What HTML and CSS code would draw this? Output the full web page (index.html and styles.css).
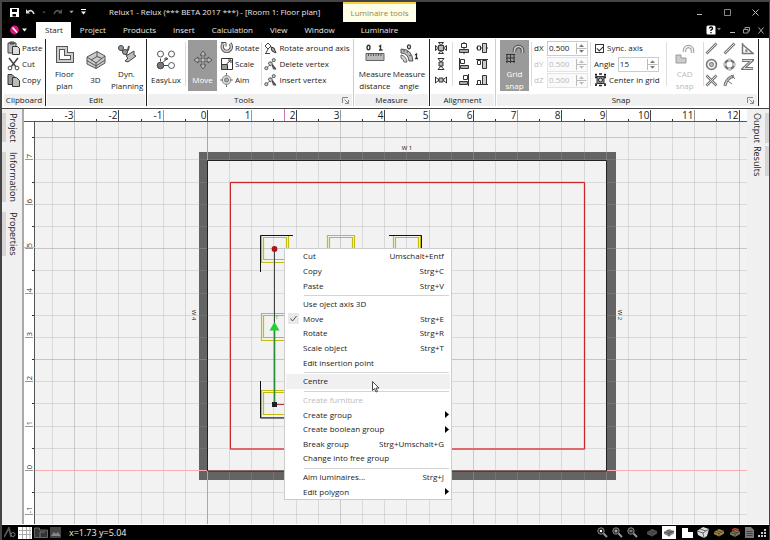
FILE: index.html
```html
<!DOCTYPE html>
<html lang="en">
<head>
<meta charset="utf-8">
<title>Relux1 - Relux</title>
<link rel="stylesheet" href="styles.css">
</head>
<body>
<svg class="sprite" aria-hidden="true">
  <symbol id="caret" viewBox="0 0 6 4"><path d="M0.5 0.5h5L3 3.5z" fill="currentColor"/></symbol>
  <symbol id="spin" viewBox="0 0 11 13"><path d="M0.5 1v11M0.5 6.5h10" stroke="#bbb" fill="none"/><path d="M5.5 2.2L8 5H3zM5.5 10.8L8 8H3z" fill="currentColor"/></symbol>
  <symbol id="launch" viewBox="0 0 7 7"><path d="M0.5 6V0.5H6M2.5 2.5L6 6M6.5 3v3.5H3" fill="none" stroke="#888"/></symbol>
  <symbol id="vertex" viewBox="0 0 14 14"><path d="M2 12.5L11.5 2M6 4.500L12 11" stroke="#666" fill="none"/><circle cx="2.5" cy="11.500" r="1.700" fill="#ccc" stroke="#555"/><circle cx="10.500" cy="2.800" r="1.700" fill="#ccc" stroke="#555"/><path d="M4.500 6l3-1.500 2 3-3 1.500z" fill="#ccc" stroke="#555"/><path d="M9 8l4 4.500-3-.3z" fill="#888" stroke="#333"/></symbol>
  <symbol id="lens" viewBox="0 0 11 11"><circle cx="4" cy="4" r="3.200" fill="#222" stroke="#888"/><path d="M6.500 6.500L10 10" stroke="#999" stroke-width="1.800"/></symbol>
  <symbol id="box" viewBox="0 0 12 9"><path d="M1 4l5-3 5 2v2.500L6 8.500 1 6z" fill="currentColor"/><path d="M1 4l5 1.500 5-2.500M6 5.500v3M3.500 2.500l5 1.700" stroke="#333" stroke-width=".7" fill="none"/></symbol>
</svg>
<div class="window">
  <header class="titlebar">
    <div class="title-row">
      <div class="quick">
        <button aria-label="Save"><svg width="9" height="9" viewBox="0 0 9 9"><path d="M0 0h9v9H0z" fill="#fff"/><path d="M2 1h5v3H2zM2.500 6h3.500v2.500H2.500z"/></svg></button>
        <button aria-label="Undo" class="undo"><svg width="9" height="6" viewBox="0 0 9 6"><path d="M1.500 3Q6-.5 8 5" fill="none" stroke="#ddd" stroke-width="1.600"/><path d="M0 0v4.500h4z" fill="#ddd"/></svg></button>
        <button aria-label="Undo list" class="dim"><svg width="4" height="3"><use href="#caret"/></svg></button>
        <button aria-label="Redo"><svg width="9" height="6" viewBox="0 0 9 6"><path d="M7.500 3Q3-.5 1 5" fill="none" stroke="#555" stroke-width="1.600"/><path d="M9 0v4.500H5z" fill="#555"/></svg></button>
        <button aria-label="Redo list" class="soft"><svg width="5" height="4"><use href="#caret"/></svg></button>
        <button aria-label="Customize"><svg width="5" height="6" viewBox="0 0 5 6"><path d="M0 .5h5" stroke="#fff"/><path d="M0 2.500h5L2.500 5.500z" fill="#fff"/></svg></button>
      </div>
      <h1>Relux1 - Relux (*** BETA 2017 ***) - [Room 1: Floor plan]</h1>
      <div class="context-tab">Luminaire tools</div>
      <div class="win-buttons">
        <button aria-label="Minimize"><svg width="7" height="7"><path d="M1 5.500h5" stroke="#bbb"/></svg></button>
        <button aria-label="Maximize"><svg width="7" height="7"><path d="M.5.5h6v6h-6z" fill="none" stroke="#888"/></svg></button>
        <button aria-label="Close"><svg width="7" height="7"><path d="M.5.5l6 6M6.500.5l-6 6" stroke="#bbb"/></svg></button>
      </div>
    </div>
    <nav class="tab-row">
      <button class="app" aria-label="Application menu"><svg width="18" height="10" viewBox="0 0 18 10"><circle cx="4.500" cy="5" r="4.400" fill="#e5127d"/><path d="M2.500 2.500L7 7.500" stroke="#fff" stroke-width="1.600"/><path d="M12 3.500h5L14.500 6.500z" fill="#fff"/></svg></button>
      <button class="tab current">Start</button>
      <button class="tab">Project</button>
      <button class="tab">Products</button>
      <button class="tab">Insert</button>
      <button class="tab">Calculation</button>
      <button class="tab">View</button>
      <button class="tab">Window</button>
      <button class="tab lum">Luminaire</button>
      <div class="doc-buttons">
        <button aria-label="Help"><svg width="15" height="10" viewBox="0 0 15 10"><path d="M2 .5h6q1.500 0 1.500 1.500v7.500H2Q.5 9.500.5 8V2Q.5.5 2 .5z" fill="#fff"/><path d="M3.500 3.500Q3.500 2 5 2t1.500 1.400Q6.500 4.300 5 5v1M5 7v1.300" fill="none" stroke="#000" stroke-width="1.300"/><path d="M11 3h4l-2 2.500z" fill="#777"/></svg></button>
        <button aria-label="Minimize document"><svg width="6" height="7"><path d="M1 5.500h5" stroke="#bbb"/></svg></button>
        <button aria-label="Restore document"><svg width="7" height="7"><path d="M2 2V.5h4.500V4H5M.5 2.500H5v3.500H.5z" fill="none" stroke="#999"/></svg></button>
        <button aria-label="Close document"><svg width="6" height="7"><path d="M.5.5l5 6M5.500.5l-5 6" stroke="#aaa"/></svg></button>
      </div>
    </nav>
  </header>

  <section class="ribbon" aria-label="Ribbon">
    <div class="group clipboard">
      <div class="tools">
        <div class="rows">
          <button class="small"><svg width="13" height="14" viewBox="0 0 13 14"><path d="M1 2h8v10H1z" fill="#bbb" stroke="#444"/><path d="M3 1h4v2H3z" fill="#777" stroke="#444"/><path d="M5.500 5.500h5l2 2v6h-7z" fill="#ddd" stroke="#333"/></svg>Paste</button>
          <button class="small"><svg width="13" height="14" viewBox="0 0 13 14"><path d="M2 1l7 9M11 1L4 10" stroke="#444" stroke-width="1.500"/><circle cx="3" cy="11" r="1.900" fill="#fff" stroke="#444"/><circle cx="10" cy="11" r="1.900" fill="#fff" stroke="#444"/></svg>Cut</button>
          <button class="small"><svg width="13" height="14" viewBox="0 0 13 14"><path d="M1 1.500h4l3 3v7H1z" fill="#999" stroke="#333"/><path d="M5.500 4.500h4l3 3v6h-7z" fill="#bbb" stroke="#333"/></svg>Copy</button>
        </div>
      </div>
      <h2>Clipboard</h2>
    </div>
    <div class="group edit">
      <div class="tools">
        <button class="big"><svg width="20" height="20" viewBox="0 0 20 20"><path d="M3 4h8v6h6v7H3z" fill="none" stroke="#555" stroke-width="4"/><path d="M3 4h8v6h6v7H3z" fill="none" stroke="#ccc" stroke-width="2"/></svg>Floor<br>plan</button>
        <button class="big"><svg width="20" height="20" viewBox="0 0 20 20"><path d="M1 7l10-5.500 8 4.500v7l-9 5.500L1 14z" fill="#ccc" stroke="#555"/><path d="M1 7l9 6 9-7M10 13v5.500M11 1.500v5L5 10M11 6.500l5 2M1 10.500l9 5.500 9-6" fill="none" stroke="#555"/></svg>3D</button>
        <button class="big"><svg width="20" height="20" viewBox="0 0 20 20"><path d="M2 3l5 5 4-2 1-4M6 7l4 4" stroke="#555" stroke-width="2" fill="none"/><circle cx="4" cy="4" r="2.500" fill="#999" stroke="#444"/><circle cx="8" cy="8" r="2.500" fill="#999" stroke="#444"/><path d="M9 12l8-5v4l2 1-8 6-3-1 3-3z" fill="#bbb" stroke="#444"/></svg>Dyn.<br>Planning</button>
      </div>
      <h2>Edit</h2>
    </div>
    <div class="group main">
      <div class="tools">
        <button class="big"><svg width="20" height="20" viewBox="0 0 20 20"><g fill="#fff" stroke="#555"><circle cx="4.500" cy="4" r="3"/><circle cx="15.500" cy="4" r="3"/><circle cx="15.500" cy="15.500" r="3"/></g><circle cx="4.500" cy="15.500" r="3.300" fill="#777" stroke="#444"/><path d="M6 13l6-5M4.500 8.500v3M8 15.500h4M10 7v3M8 9h4" stroke="#444" fill="none"/></svg>EasyLux</button>
        <i class="rule"></i>
        <button class="big pressed"><svg width="20" height="20" viewBox="0 0 20 20"><path d="M10 1l3 4h-2v4h4V7l4 3-4 3v-2h-4v4h2l-3 4-3-4h2v-4H5v2l-4-3 4-3v2h4V5H7z" fill="#bbb" stroke="#444" stroke-width=".8"/></svg>Move</button>
        <div class="rows first">
          <button class="small"><svg width="13" height="14" viewBox="0 0 13 14"><path d="M3.500 2.500a4.600 4.600 0 1 0 6.500 0" fill="none" stroke="#555" stroke-width="3.400"/><path d="M3.500 2.500a4.600 4.600 0 1 0 6.500 0" fill="none" stroke="#ccc" stroke-width="1.600"/><path d="M1 1.500h5v4" fill="none" stroke="#555"/></svg>Rotate</button>
          <button class="small"><svg width="13" height="14" viewBox="0 0 13 14"><path d="M1.500 1.500h11v11h-11z" fill="#fff" stroke="#333"/><path d="M1.500 7.500h6v5h-6z" fill="#999" stroke="#333"/><path d="M6.500 7L11 3M8 3h3v3" fill="none" stroke="#333"/></svg>Scale</button>
          <button class="small"><svg width="13" height="14" viewBox="0 0 13 14"><circle cx="6.500" cy="7" r="4.400" fill="#ddd" stroke="#888"/><circle cx="6.500" cy="7" r="2" fill="#aaa" stroke="#777"/><path d="M6.500 0v3M6.500 11v3M0 7h3M10 7h3" stroke="#777"/></svg>Aim</button>
        </div>
        <i class="rule"></i>
        <div class="rows">
          <button class="small"><svg width="13" height="14" viewBox="0 0 13 14"><path d="M1 5l3-3 3 3-3 3z" fill="#fff" stroke="#444"/><path d="M1 12.500h5M4 8L2 12" stroke="#444"/><path d="M7 6l3 1 2 5-4-2z" fill="#aaa" stroke="#333"/></svg>Rotate around axis</button>
          <button class="small"><svg width="13" height="14"><use href="#vertex"/></svg>Delete vertex</button>
          <button class="small"><svg width="13" height="14"><use href="#vertex"/></svg>Insert vertex</button>
        </div>
      </div>
      <h2 class="with-launcher">Tools<button class="launcher" aria-label="Tools options"><svg width="7" height="7"><use href="#launch"/></svg></button></h2>
    </div>
    <div class="group measure">
      <div class="tools">
        <button class="big"><svg width="20" height="20" viewBox="0 0 20 20"><path d="M1 9.500h18v7H1z" fill="#bbb" stroke="#666"/><path d="M3.500 9v3M6 9v3M8.500 9v3M11 9v3M13.500 9v3M16 9v3" stroke="#555"/><ellipse cx="3.500" cy="3.500" rx="1.500" ry="2.200" fill="none" stroke="#333" stroke-width="1.400"/><path d="M14 2.500l1.500-1V6M14 6h3.500" fill="none" stroke="#333" stroke-width="1.400"/></svg>Measure<br>distance</button>
        <button class="big"><svg width="20" height="20" viewBox="0 0 20 20"><path d="M2 5Q13 5 14 17h-4Q9 9 2 9z" fill="#bbb" stroke="#555"/><path d="M2 11q5 1 6 7H5q0-3-3-4z" fill="#ddd" stroke="#666"/><path d="M5 6v2M9 7L8 9M12 11l-2 1" stroke="#555"/><ellipse cx="10" cy="2.800" rx="1.500" ry="2" fill="none" stroke="#333" stroke-width="1.300"/><path d="M16 11l1.500-1v4.500M16 14.500h3" fill="none" stroke="#333" stroke-width="1.300"/></svg>Measure<br>angle</button>
      </div>
      <h2>Measure</h2>
    </div>
    <div class="group align">
      <div class="tools">
        <div class="rows icons">
          <button aria-label="Distribute both"><svg width="12" height="12" viewBox="0 0 12 12"><path d="M3.500 3.500h5v5h-5z" fill="#bbb" stroke="#333"/><path d="M3.500.5h5L6 3.500zM3.500 11.500h5L6 8.500zM.5 3.500v5L3.500 6zM11.500 3.500v5L8.500 6z" fill="#ddd" stroke="#333"/></svg></button>
          <button aria-label="Distribute vertically"><svg width="12" height="12" viewBox="0 0 12 12"><path d="M4 4h4v4H4z" fill="#bbb" stroke="#333"/><path d="M3 .5h6L6 4zM3 11.500h6L6 8z" fill="#fff" stroke="#333"/></svg></button>
          <button aria-label="Distribute horizontally"><svg width="12" height="12" viewBox="0 0 12 12"><path d="M4 4h4v4H4z" fill="#bbb" stroke="#333"/><path d="M.5 3v6L4 6zM11.500 3v6L8 6z" fill="#fff" stroke="#333"/></svg></button>
        </div>
        <i class="rule"></i>
        <div class="rows icons">
          <button aria-label="Align centre vertical"><svg width="12" height="12" viewBox="0 0 12 12"><path d="M6 0v12" stroke="#333"/><path d="M3.500 1.500h5v4h-5z" fill="#fff" stroke="#333"/><path d="M1.500 7.500h9v3h-9z" fill="#aaa" stroke="#333"/></svg></button>
          <button aria-label="Align left"><svg width="12" height="12" viewBox="0 0 12 12"><path d="M1.500 0v12" stroke="#333"/><path d="M2.500 1.500h4v4h-4z" fill="#fff" stroke="#333"/><path d="M2.500 7.500h8v3h-8z" fill="#aaa" stroke="#333"/></svg></button>
          <button aria-label="Align right"><svg width="12" height="12" viewBox="0 0 12 12"><path d="M10.500 0v12" stroke="#333"/><path d="M5.500 1.500h4v4h-4z" fill="#fff" stroke="#333"/><path d="M1.500 7.500h8v3h-8z" fill="#aaa" stroke="#333"/></svg></button>
        </div>
        <div class="rows icons">
          <button aria-label="Align centre horizontal"><svg width="12" height="12" viewBox="0 0 12 12"><path d="M0 6h12" stroke="#333"/><path d="M1.500 4h3v4h-3z" fill="#fff" stroke="#333"/><path d="M6.500 1.500h4v9h-4z" fill="#ccc" stroke="#333"/></svg></button>
          <button aria-label="Align top"><svg width="12" height="12" viewBox="0 0 12 12"><path d="M0 1.500h12" stroke="#333"/><path d="M1.500 2.500h3v4h-3z" fill="#fff" stroke="#333"/><path d="M6.500 2.500h4v8h-4z" fill="#ccc" stroke="#333"/></svg></button>
          <button aria-label="Align bottom"><svg width="12" height="12" viewBox="0 0 12 12"><path d="M0 10.500h12" stroke="#333"/><path d="M1.500 6.500h3v4h-3z" fill="#fff" stroke="#333"/><path d="M6.500 1.500h4v9h-4z" fill="#ccc" stroke="#333"/></svg></button>
        </div>
      </div>
      <h2>Alignment</h2>
    </div>
    <div class="group snap">
      <div class="tools">
        <button class="big pressed"><svg width="20" height="20" viewBox="0 0 20 20"><path d="M1 10.500h9M1 14h9M1 17.500h9M2 10v9M5.500 10v9M9 10v9" stroke="#333"/><path d="M9.500 8V6.500a4 4 0 0 1 8 0V9" fill="none" stroke="#444" stroke-width="3.500"/><path d="M9.500 8V6.500a4 4 0 0 1 8 0V9" fill="none" stroke="#ccc" stroke-width="1.700"/></svg>Grid<br>snap</button>
        <i class="rule"></i>
        <div class="rows fields">
          <label>dX <span class="spin"><input type="text" value="0.500"><svg width="11" height="13"><use href="#spin"/></svg></span></label>
          <label class="off">dY <span class="spin"><input type="text" value="0.500" disabled><svg width="11" height="13"><use href="#spin"/></svg></span></label>
          <label class="off">dZ <span class="spin"><input type="text" value="0.500" disabled><svg width="11" height="13"><use href="#spin"/></svg></span></label>
        </div>
        <i class="rule"></i>
        <div class="rows options">
          <label class="check"><input type="checkbox" checked>Sync. axis</label>
          <label class="angle">Angle <span class="spin"><input type="text" value="15"><svg width="11" height="13"><use href="#spin"/></svg></span></label>
          <button class="small"><svg width="13" height="14" viewBox="0 0 13 14"><path d="M3 3.500h7v7H3z" fill="#999" stroke="#333"/><path d="M1 1.500h2M1 4.500h2M10 1.500h2M10 4.500h2M1 12h2M10 12h2M2 1v3M11 1v3M2 10v3M11 10v3M5 1h3M5 12.500h3" stroke="#222" stroke-width="1.300"/><circle cx="6.500" cy="7" r="2" fill="#ddd" stroke="#222"/></svg>Center in grid</button>
        </div>
        <i class="rule"></i>
        <button class="big faded"><svg width="20" height="20" viewBox="0 0 20 20"><path d="M1 11h5v3h5v5H1z" fill="#ccc" stroke="#999"/><path d="M9.500 8V6.500a4 4 0 0 1 8 0V9" fill="none" stroke="#999" stroke-width="3.500"/><path d="M9.500 8V6.500a4 4 0 0 1 8 0V9" fill="none" stroke="#eee" stroke-width="1.700"/></svg>CAD<br>snap</button>
        <i class="rule"></i>
        <div class="snaps">
          <button aria-label="Snap end"><svg width="13" height="13" viewBox="0 0 13 13"><path d="M1.500 11.500l10-10" stroke="#777" stroke-width="2.600"/><path d="M2 11l9-9" stroke="#ddd"/></svg></button>
          <button aria-label="Snap middle"><svg width="13" height="13" viewBox="0 0 13 13"><path d="M1.500 11.500l10-10" stroke="#777" stroke-width="2.600"/><path d="M2 11l9-9" stroke="#ddd"/></svg></button>
          <button aria-label="Snap perpendicular"><svg width="13" height="13" viewBox="0 0 13 13"><path d="M1.500 1v10.500H12L1.500 2.500" fill="none" stroke="#777" stroke-width="1.500"/><path d="M4 9h3M5 7v3" stroke="#777"/></svg></button>
          <button aria-label="Snap centre"><svg width="13" height="13" viewBox="0 0 13 13"><circle cx="6.500" cy="6.500" r="5" fill="#eee" stroke="#777" stroke-width="1.500"/><circle cx="6.500" cy="6.500" r="2" fill="#bbb" stroke="#777"/></svg></button>
          <button aria-label="Snap quadrant"><svg width="13" height="13" viewBox="0 0 13 13"><circle cx="6.500" cy="6.500" r="4.300" fill="none" stroke="#777" stroke-width="2.500"/><path d="M6.500 0v3.500M6.500 9.500V13M0 6.500h3.500M9.500 6.500H13" stroke="#ccc" stroke-width="2.500"/></svg></button>
          <button aria-label="Snap path"><svg width="13" height="13" viewBox="0 0 13 13"><path d="M1 2.500h10L2.500 10.500H12" fill="none" stroke="#777" stroke-width="3"/><path d="M1.500 2.500H11L2.500 10.500h9" fill="none" stroke="#ddd"/></svg></button>
          <button aria-label="Snap intersection"><svg width="13" height="13" viewBox="0 0 13 13"><path d="M1.500 1.500l10 10M11.500 1.500l-10 10" stroke="#777" stroke-width="2.600"/><path d="M2 2l9 9M11 2l-9 9" stroke="#ddd"/></svg></button>
          <button aria-label="Snap tangent"><svg width="13" height="13" viewBox="0 0 13 13"><path d="M2 12Q3 4 11 2" fill="none" stroke="#777" stroke-width="3"/><path d="M2 11.500Q3.500 4 10.500 2" fill="none" stroke="#ddd"/><path d="M5 7l4 3M8 1l4 4" stroke="#777"/></svg></button>
        </div>
      </div>
      <h2 class="with-launcher">Snap<button class="launcher" aria-label="Snap options"><svg width="7" height="7"><use href="#launch"/></svg></button></h2>
    </div>
  </section>

  <main class="workspace">
    <aside class="side left">
      <button>Project</button>
      <button>Information</button>
      <button>Properties</button>
    </aside>
    <div class="plan">
      <svg id="ruler-x" class="ruler-x" aria-label="Horizontal ruler"></svg>
      <svg id="ruler-y" class="ruler-y" aria-label="Vertical ruler"></svg>
      <svg id="drawing" class="drawing" aria-label="Floor plan">
        <path class="wall" d="M164 30h417v328H164zM172.500 38.500h399v310.500h-399z"/>
        <g id="grid"></g>
        <path d="M0 348.500h712" stroke="#f3b0b0"/>
        <path d="M172.500 38.500h399v310.500h-399z" fill="none" stroke="#222"/>
        <path d="M172.500 0v38M172.500 349v60" stroke="#5fdc5f"/>
        <path d="M195 60.500h354.500v266.500H195z" fill="none" stroke="#f2b0b0" stroke-width="2"/>
        <path d="M195.500 60.500h354v266.500h-354z" fill="none" stroke="#c8262c"/>
        <g fill="none" stroke="#c2bd10" stroke-width="1.200">
          <path d="M226.500 113.500h27v27h-27zM228.500 115.500h23v22h-23z"/>
          <path d="M292.500 113.500h27v27h-27zM294.500 115.500h23v22h-23z"/>
          <path d="M358.500 113.500h27v27h-27zM360.500 115.500h23v22h-23z"/>
          <path d="M226.500 191.500h27v27h-27zM228.500 193.500h23v22h-23z"/>
          <path d="M226.500 268.500h27v27h-27zM228.500 270.500h23v22h-23z"/>
        </g>
        <path d="M225.500 150v-36.500H258M354 113.500h32.500V141M225.500 259v37H253" fill="none" stroke="#111"/>
        <path d="M239.500 127v84" stroke="#444"/>
        <path d="M239.500 282v-76" stroke="#2c8d38" stroke-width="1.600"/>
        <path d="M239.500 282.500h12" stroke="#a33"/>
        <circle cx="239.500" cy="127" r="2.900" fill="#b5121b"/>
        <path d="M239.500 200l5 8.500h-10z" fill="#1fd22c"/>
        <path d="M237 280h5v5h-5z" fill="#222"/>
        <text class="axis" x="240" y="197">Y</text>
        <text class="tag" transform="translate(372 26)" text-anchor="middle" y="2">W 1</text>
        <text class="tag" transform="translate(159 193) rotate(90)" text-anchor="middle" y="2">W 4</text>
        <text class="tag" transform="translate(585 193) rotate(90)" text-anchor="middle" y="2">W 2</text>
      </svg>
      <div class="menu" role="menu">
        <button role="menuitem">Cut<kbd>Umschalt+Entf</kbd></button>
        <button role="menuitem">Copy<kbd>Strg+C</kbd></button>
        <button role="menuitem">Paste<kbd>Strg+V</kbd></button>
        <hr>
        <button role="menuitem">Use oject axis 3D</button>
        <button role="menuitem" class="ticked"><svg class="tick" width="11" height="11" viewBox="0 0 11 11"><path d="M0 0h11v11H0z" fill="#e9e9e9"/><path d="M2.500 5.500L4.500 8l4-5" fill="none" stroke="#555"/></svg>Move<kbd>Strg+E</kbd></button>
        <button role="menuitem">Rotate<kbd>Strg+R</kbd></button>
        <button role="menuitem">Scale object<kbd>Strg+T</kbd></button>
        <button role="menuitem">Edit insertion point</button>
        <hr>
        <button role="menuitem" class="hover">Centre</button>
        <hr>
        <button role="menuitem" disabled>Create furniture</button>
        <button role="menuitem">Create group<svg class="sub" width="4" height="7"><path d="M0 0l4 3.500L0 7z"/></svg></button>
        <button role="menuitem">Create boolean group<svg class="sub" width="4" height="7"><path d="M0 0l4 3.500L0 7z"/></svg></button>
        <button role="menuitem">Break group<kbd>Strg+Umschalt+G</kbd></button>
        <button role="menuitem">Change into free group</button>
        <hr>
        <button role="menuitem">Aim luminaires...<kbd>Strg+J</kbd></button>
        <button role="menuitem">Edit polygon<svg class="sub" width="4" height="7"><path d="M0 0l4 3.500L0 7z"/></svg></button>
        <svg class="pointer" width="8" height="12" viewBox="0 0 8 12"><path d="M.5.5v9l2-2 1.500 3.500 1.500-.7L4 7h3z" fill="#fff" stroke="#333" stroke-width=".9"/></svg>
      </div>
    </div>
    <aside class="side right">
      <button>Output</button>
      <button>Results</button>
    </aside>
  </main>

  <footer class="status">
    <div class="modes">
      <button aria-label="Text"><svg width="12" height="11" viewBox="0 0 12 11"><path d="M0 10L5 1l2 9" fill="none" stroke="#555" stroke-width="1.800"/><circle cx="9" cy="7.500" r="2" fill="none" stroke="#777"/></svg></button>
      <button aria-label="Grid" class="on"><svg width="14" height="12" viewBox="0 0 14 12"><path d="M1 3.500h12M1 7.500h12M4.500 0v12M8.500 0v12M12 0v12" stroke="#aaa"/></svg></button>
      <button aria-label="Room"><svg width="14" height="11" viewBox="0 0 14 11"><path d="M.5 1h5v2h8v7.500H.5z" fill="#333" stroke="#666"/><path d="M6 5h5M6 5v5" stroke="#777"/></svg></button>
      <button aria-label="Image"><svg width="11" height="11" viewBox="0 0 11 11"><path d="M0 0h11v11H0z" fill="#444"/><path d="M1 9l3-4 2 2 2-2 2.500 4z" fill="#888"/></svg></button>
    </div>
    <output>x=1.73 y=5.04</output>
    <div class="views">
      <button aria-label="Zoom all"><svg width="11" height="11"><use href="#lens"/><path d="M3 3h2v2H3z" fill="#fff"/></svg></button>
      <button aria-label="Zoom in"><svg width="11" height="11"><use href="#lens"/><path d="M2.500 4h3M4 2.500v3" stroke="#ccc"/></svg></button>
      <button aria-label="Zoom out"><svg width="11" height="11"><use href="#lens"/><path d="M2.500 4h3" stroke="#ccc"/></svg></button>
      <button aria-label="Wireframe" class="wire"><svg width="12" height="9"><use href="#box"/></svg></button>
      <button aria-label="Solid" class="on solid"><svg width="12" height="9"><use href="#box"/></svg></button>
      <button aria-label="Plan"><svg width="11" height="10"><path d="M0 0h6v4h5v6H0z" fill="#fff"/></svg></button>
      <button aria-label="3D view" class="white"><svg width="12" height="11" viewBox="0 0 12 11"><path d="M0 4l6-4 6 2-2 7-3 2-6-3z" fill="#ddd"/><path d="M0 4l6 2 6-4M6 6l1 5M3 2l6 2" stroke="#666" fill="none"/></svg></button>
      <button aria-label="Luminance" class="gold"><svg width="12" height="9"><use href="#box"/></svg></button>
      <button aria-label="False colours" class="rust"><svg width="12" height="10"><use href="#box"/><path d="M3 2l3-1.500L10 2" stroke="#c33" stroke-width="1.500" fill="none"/></svg></button>
      <button aria-label="Report"><svg width="9" height="11"><path d="M0 0h6l3 3v8H0z" fill="#777"/><path d="M1.500 4.500h6M1.500 6.500h6M1.500 8.500h6" stroke="#444"/></svg></button>
      <svg width="8" height="8"><path d="M0 6h2v2H0zM3 6h2v2H3zM6 6h2v2H6zM3 3h2v2H3zM6 3h2v2H6zM6 0h2v2H6z" fill="#ccc"/></svg>
    </div>
  </footer>
</div>
<script src="plan.js"></script>
</body>
</html>
```
FILE: styles.css
```css
* { box-sizing: border-box; }

body {
  margin: 0;
  font-family: "Open Sans", "Noto Sans", sans-serif;
  font-size: 8px;
  line-height: 12px;
  color: #222;
}

button {
  margin: 0;
  padding: 0;
  border: 0;
  background: none;
  font: inherit;
  color: inherit;
}

svg { display: block; flex: none; }
.sprite { position: absolute; width: 0; height: 0; }
h1, h2 { margin: 0; font-size: inherit; font-weight: 400; }

.window {
  display: flex;
  flex-direction: column;
  height: 100vh;
  border: 2px solid #444;
  border-width: 2px 1px 0 2px;
  background: #f0f0f0;
}

/* Title bar and tabs */
.titlebar { background: #000; color: #e8e8e8; }
.title-row, .tab-row { display: flex; align-items: center; }
.title-row { height: 20px; }
.tab-row { height: 16px; }

.quick {
  display: flex;
  align-items: center;
  gap: 7px;
  width: 107px;
  padding-left: 8px;
}
.quick .dim { color: #555; }
.quick .soft { color: #aaa; }
.title-row h1 { width: 234px; white-space: nowrap; }
.context-tab {
  align-self: stretch;
  width: 73px;
  border-top: 2px solid #f7d046;
  background: #fffee6;
  color: #8b8656;
  line-height: 18px;
  text-align: center;
}
.win-buttons, .doc-buttons { display: flex; align-items: center; margin-left: auto; }
.win-buttons { gap: 21px; padding-right: 10px; }
.doc-buttons { gap: 8px; padding-right: 5px; }

.app { width: 34px; padding-left: 8px; }
.tab { align-self: stretch; padding: 0 8px 0 9px; }
.tab.current { background: #fff; color: #222; }
.tab.lum { margin-left: 9px; }

/* Ribbon */
.ribbon {
  display: flex;
  height: 71px;
  padding: 1px 0 2px;
  border-bottom: 1px solid #444;
  background: #fff;
}
.group {
  display: flex;
  flex-direction: column;
  flex: none;
  border-right: 1px solid #222;
}
.group h2 {
  display: flex;
  align-items: center;
  justify-content: center;
  position: relative;
  height: 12px;
  margin: 0 1px;
  background: #f0f0f0;
}
.group .with-launcher { padding-right: 12px; }
.launcher { position: absolute; right: 3px; }
.tools { display: flex; flex: 1; padding-top: 1px; }

.clipboard { width: 44px; padding-left: 1px; }
.edit { width: 101px; }
.main { width: 207px; border-color: #ccc; }
.measure { width: 76px; }
.align { width: 66px; border-color: #ccc; }
.snap { width: 263px; }

.clipboard .tools { padding-left: 4px; }
.edit .tools { padding-left: 3px; }
.main .tools { padding-left: 2px; }
.measure .tools { padding-left: 4px; }
.align .tools { padding-left: 2px; }
.snap .tools { padding-left: 4px; }

.big {
  display: block;
  width: 31px;
  height: 51px;
  padding-top: 4px;
  text-align: center;
  white-space: nowrap;
}
.big svg { margin: 0 auto 4px; }
.measure .big, .main .big:first-child { width: 34px; }
.big.pressed { width: 29px; background: #9a9a9a; color: #fff; }
.big.faded { width: 32px; color: #bbb; }
.rule { width: 1px; margin: 2px 2px 8px; background: #ddd; }

.rows { display: grid; grid-template-rows: repeat(3, 16px); align-items: center; }
.rows.first { padding-left: 3px; }
.small { display: flex; align-items: center; gap: 2px; white-space: nowrap; }
.rows.icons { padding: 0 3px; }

.fields label { display: flex; align-items: center; justify-content: space-between; width: 54px; }
.off { color: #bbb; }
.spin {
  display: flex;
  align-items: center;
  width: 41px;
  height: 15px;
  border: 1px solid #ccc;
  color: #777;
}
.off .spin { border-color: #e4e4e4; background: #fafafa; color: #bbb; }
.spin input {
  flex: 1;
  min-width: 0;
  padding: 0 0 0 1px;
  border: 0;
  background: none;
  font: inherit;
  color: #222;
}
.off input { color: #bbb; }

.options { margin: 0 4px 0 1px; }
.options label { display: flex; align-items: center; gap: 3px; white-space: nowrap; }
.check input {
  appearance: none;
  width: 9px;
  height: 9px;
  margin: 0 0 0 1px;
  border: 1px solid #333;
  background: #fff;
}
.check input:checked::before {
  content: "";
  display: block;
  width: 5px;
  height: 3px;
  margin: 1px;
  border: solid #333;
  border-width: 0 0 1px 1px;
  transform: rotate(-45deg);
}

.snaps {
  display: grid;
  grid-template-columns: repeat(3, 18px);
  grid-template-rows: repeat(3, 16px);
  align-items: center;
  justify-items: center;
  margin-left: -3px;
}

/* Workspace */
.workspace { display: flex; flex: 1; min-height: 0; }
.side {
  display: flex;
  flex-direction: column;
  align-items: flex-start;
  flex: none;
  padding-top: 4px;
}
.side button {
  writing-mode: vertical-rl;
  font-size: 9px;
  line-height: 15px;
}
.left { width: 20px; gap: 10px; }
.left button { border-left: 4px solid #d8d4d4; }
.right { width: 22px; align-items: flex-end; gap: 3px; }
.right button { border-right: 4px solid #d4d4d4; }

.plan {
  position: relative;
  display: grid;
  flex: 1;
  grid-template: 13px 1fr / 11px 1fr;
  border-left: 2px solid #aaa;
}
.ruler-x, .ruler-y, .drawing { width: 100%; height: 100%; min-height: 0; overflow: hidden; }
.ruler-x {
  grid-column: 1 / 3;
  overflow: visible;
  border-bottom: 1px solid #555;
  background: #fff;
}
.ruler-y { overflow: visible; border-right: 1px solid #555; background: #fff; }
.drawing { background: #f2f2f2; }
.ruler-x text { font-size: 10px; fill: #222; }
.ruler-y text { font-size: 8px; fill: #333; }
.wall { fill: #646464; fill-rule: evenodd; }
.tag { font-size: 6px; fill: #111; }
.axis { font-size: 6px; fill: #1fd22c; }

/* Context menu */
.menu {
  position: absolute;
  left: 260px;
  top: 139px;
  display: flex;
  flex-direction: column;
  width: 168px;
  min-height: 252px;
  padding: 0 1px;
  border: 1px solid #ccc;
  background: #fff;
}
.menu button {
  display: flex;
  align-items: center;
  flex: 1;
  padding: 0 6px 0 17px;
  text-align: left;
}
.menu button:disabled { color: #bbb; }
.menu .hover { background: #f0f0f0; }
.menu kbd { margin-left: auto; font: inherit; }
.menu hr { width: 145px; height: 1px; margin: 2px 0 1px 18px; border: 0; background: #d4d4d4; }
.menu .ticked { padding-left: 2px; }
.tick { margin-right: 4px; }
.sub { margin: 0 -5px 0 auto; }
.pointer { position: absolute; left: 87px; top: 132px; }

/* Status bar */
.status {
  display: flex;
  align-items: center;
  height: 16px;
  border-top: 1px solid #fff;
  background: #000;
  color: #eee;
  font-size: 9px;
}
.modes { display: flex; align-items: center; gap: 2px; width: 67px; padding-left: 2px; }
.on { background: #fff; }
.views { display: flex; align-items: center; gap: 4px; margin-left: auto; padding-right: 3px; }
.wire { color: #555; margin-left: 4px; }
.solid { padding: 2px 1px; color: #888; margin-right: 2px; }
.gold { color: #a58a3a; }
.rust { color: #7a7a55; }
```
FILE: plan.js
```js
// Pixels per metre across and down.
const UNIT_X = 44.3;
const UNIT_Y = 44.37;
const ORIGIN = { x: 172.5, y: 348.5 };
const NS = "http://www.w3.org/2000/svg";

function add(parent, name, attrs, text) {
  const el = document.createElementNS(NS, name);
  for (const key in attrs) el.setAttribute(key, attrs[key]);
  if (text !== undefined) el.textContent = text;
  parent.appendChild(el);
}

const grid = document.getElementById("grid");
const rulerX = document.getElementById("ruler-x");
const rulerY = document.getElementById("ruler-y");
const { width, height } = document.getElementById("drawing").getBoundingClientRect();
const snap = (v) => Math.floor(v) + 0.5;

for (let i = -7; ORIGIN.x + (i * UNIT_X) / 2 < width; i++) {
  const x = snap(ORIGIN.x + (i * UNIT_X) / 2);
  add(grid, "path", { d: `M${x} 0v${height}`, stroke: "#999", "stroke-opacity": i % 6 ? 0.28 : 0.45 });
  const rx = x + 11;
  if (i % 2) {
    add(rulerX, "path", { d: `M${rx} 10v2`, stroke: "#333" });
  } else {
    add(rulerX, "path", { d: `M${rx} 1v11`, stroke: i % 4 ? "#999" : "#444" });
    add(rulerX, "text", { x: rx - 1, y: 10, "text-anchor": "end" }, i / 2);
  }
}

for (let i = 15; ORIGIN.y - (i * UNIT_Y) / 2 < height; i--) {
  const y = snap(ORIGIN.y - (i * UNIT_Y) / 2);
  add(grid, "path", { d: `M0 ${y}h${width}`, stroke: "#999", "stroke-opacity": i % 5 ? 0.28 : 0.5 });
  if (i % 2) {
    add(rulerY, "path", { d: `M8 ${y}h2`, stroke: "#333" });
  } else {
    add(rulerY, "path", { d: `M1 ${y}h8`, stroke: "#999" });
    add(rulerY, "text", { transform: `translate(8 ${y - 1}) rotate(-90)` }, i / 2);
  }
}

add(rulerX, "path", { d: "M260.500 0v12", stroke: "#c77bb0" });
add(rulerY, "path", { d: "M0 125.500h11", stroke: "#e0a8d0" });
```
